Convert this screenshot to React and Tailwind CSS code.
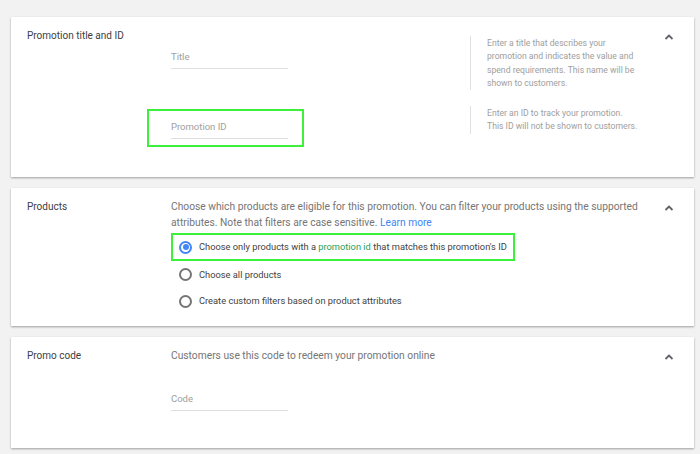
import React from "react";

function Chevron() {
  return (
    <div className="w-[10px] pt-[6px]">
      <svg width="10" height="6" viewBox="0 0 10 6" fill="none">
        <path d="M1.5 5 L5 1.5 L8.5 5" stroke="#5f6368" strokeWidth="1.8" />
      </svg>
    </div>
  );
}

function Field({ label }) {
  return (
    <div className="w-[117px] border-b border-[#e0e0e0] pb-[4px] text-[9.5px] leading-[14px] text-[#9e9e9e]">
      {label}
    </div>
  );
}

function Radio({ checked }) {
  return checked ? (
    <div className="flex h-[13px] w-[13px] shrink-0 items-center justify-center rounded-full border-2 border-[#4285f4]">
      <div className="h-[6px] w-[6px] rounded-full bg-[#4285f4]" />
    </div>
  ) : (
    <div className="h-[13px] w-[13px] shrink-0 rounded-full border-2 border-[#757575]" />
  );
}

function Card({ title, children, className }) {
  return (
    <div
      className={
        "flex bg-white pl-4 pr-[20px] pt-[11px] shadow-[0_1px_2px_rgba(0,0,0,0.35)] " +
        className
      }
    >
      <div className="w-[144px] shrink-0 text-[10px] leading-[16px] text-[#3c4043]">{title}</div>
      <div className="flex-1">{children}</div>
      <Chevron />
    </div>
  );
}

export default function App() {
  return (
    <div
      className="min-h-screen bg-[#f2f2f2] pl-[11px] pr-[6px] pt-[17px]"
      style={{ fontFamily: "Roboto, 'Noto Sans', sans-serif" }}
    >
      <div className="flex flex-col gap-[11px]">
        <Card title="Promotion title and ID" className="h-[160px]">
          <div className="flex flex-col">
            <div className="flex pt-[8px]">
              <div className="w-[299px] shrink-0 pt-[14px]">
                <Field label="Title" />
              </div>
              <div className="border-l border-[#e0e0e0] pl-[16px] pt-[1px] text-[8.65px] leading-[13.3px] text-[#9e9e9e]">
                Enter a title that describes your
                <br />
                promotion and indicates the value and
                <br />
                spend requirements. This name will be
                <br />
                shown to customers.
              </div>
            </div>
            <div className="mt-[16px] flex">
              <div className="w-[299px] shrink-0 pt-[3px]">
                <div className="-ml-[24px] w-[157px] border-2 border-[#3cf03c] pb-[6px] pl-[22px] pt-[9px]">
                  <Field label="Promotion ID" />
                </div>
              </div>
              <div className="self-start border-l border-[#e0e0e0] pl-[16px] pt-[1px] text-[8.65px] leading-[13.3px] text-[#9e9e9e]">
                Enter an ID to track your promotion.
                <br />
                This ID will not be shown to customers.
              </div>
            </div>
          </div>
        </Card>

        <Card title="Products" className="h-[138px]">
          <div className="w-[475px] text-[10.25px] leading-[16px] text-[#757575]">
            Choose which products are eligible for this promotion. You can filter your products using the supported
            attributes. Note that filters are case sensitive.{" "}
            <span className="text-[#4285f4]">Learn more</span>
          </div>
          <div className="mt-[2px] flex h-[28px] w-[344px] items-center gap-[7px] border-2 border-[#3cf03c] pl-[6px] text-[9.3px] text-[#424242]">
            <Radio checked />
            <span className="whitespace-nowrap">
              Choose only products with a <span className="text-[#1e9e5a]">promotion id</span> that matches this
              promotion's ID
            </span>
          </div>
          <div className="flex h-[27px] items-center gap-[7px] pl-[8px] text-[9.3px] text-[#424242]">
            <Radio />
            <span>Choose all products</span>
          </div>
          <div className="flex h-[26px] items-center gap-[7px] pl-[8px] text-[9.3px] text-[#424242]">
            <Radio />
            <span>Create custom filters based on product attributes</span>
          </div>
        </Card>

        <Card title="Promo code" className="h-[111px]">
          <div className="text-[10.25px] leading-[16px] text-[#757575]">
            Customers use this code to redeem your promotion online
          </div>
          <div className="mt-[28px]">
            <Field label="Code" />
          </div>
        </Card>
      </div>
    </div>
  );
}
